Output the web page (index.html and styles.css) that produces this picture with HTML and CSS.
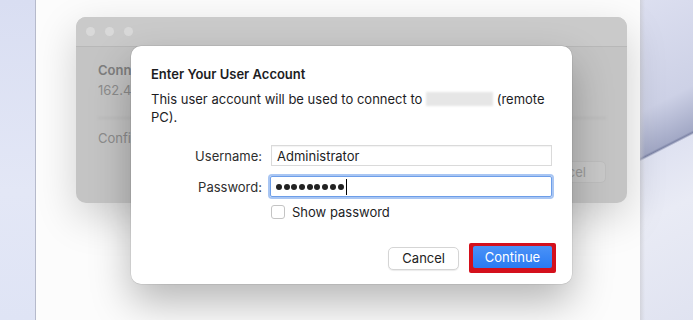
FILE: index.html
```html
<!DOCTYPE html>
<html lang="en">
<head>
    <meta charset="UTF-8">
    <meta name="viewport" content="width=device-width, initial-scale=1.0">
    <title>Enter Your User Account</title>
    <link rel="stylesheet" href="styles.css">
</head>
<body>
    <div class="wall-left"></div>

    <div class="desk">
        <!-- window behind the sheet, dimmed; only the uncovered bits are shown -->
        <div class="back-window">
            <div class="back-titlebar">
                <span class="dot"></span>
                <span class="dot"></span>
                <span class="dot"></span>
            </div>
            <div class="back-body">
                <div class="back-heading">Conn</div>
                <div class="back-text">162.4</div>
                <div class="back-rule"></div>
                <div class="back-text">Confi</div>
                <div class="back-actions">
                    <span class="back-button">Cancel</span>
                </div>
            </div>
        </div>

        <div class="dialog">
            <h1 class="dialog-title">Enter Your User Account</h1>
            <p class="dialog-text">
                This user account will be used to connect to <span class="blurred"></span> (remote<br>PC).
            </p>

            <div class="form">
                <label class="form-label">Username:</label>
                <div class="field">Administrator</div>

                <label class="form-label">Password:</label>
                <div class="field field-focus">
                    <span class="mask"></span><span class="mask"></span><span class="mask"></span>
                    <span class="mask"></span><span class="mask"></span><span class="mask"></span>
                    <span class="mask"></span><span class="mask"></span><span class="mask"></span>
                    <span class="caret"></span>
                </div>

                <span></span>
                <div class="check-row">
                    <span class="checkbox"></span>
                    <span>Show password</span>
                </div>
            </div>

            <div class="actions">
                <button class="btn">Cancel</button>
                <span class="highlight">
                    <button class="btn btn-primary">Continue</button>
                </span>
            </div>
        </div>
    </div>

    <div class="wall-right"></div>
</body>
</html>
```

FILE: styles.css
```css
body {
    display: flex;
    height: 320px;
    margin: 0;
    overflow: hidden;
    font-family: Inter, "Liberation Sans", sans-serif;
    font-size: 13px;
    color: #1d1d1f;
}

.wall-left {
    width: 35px;
    border-right: 1px solid #b6bacb;
    background: linear-gradient(to bottom, #d9def2, #e3e7f6 60%, #dfe4f5);
}

.wall-right {
    width: 53px;
    background:
        linear-gradient(to right, rgba(200, 200, 205, 0.6), rgba(200, 200, 205, 0) 5px),
        linear-gradient(153deg, #dcdff0 0, #cdd1e6 100px, #a3a9c6 140px, #7d84a6 142px, #dfe2f1 144px, #e9ebf5 200px, #dfe2f0 320px);
}

.desk {
    flex: 1;
    position: relative;
    background: #fcfcfc;
}

/* window behind the sheet */
.back-window {
    position: absolute;
    left: 40px;
    top: 17px;
    width: 551px;
    height: 186px;
    border-radius: 10px;
    background: #c4c4c4;
    box-shadow: 0 14px 40px rgba(0, 0, 0, 0.18);
    overflow: hidden;
}

.back-titlebar {
    display: flex;
    align-items: center;
    gap: 10px;
    height: 29px;
    padding-left: 10px;
    background: #cacaca;
    border-bottom: 1px solid #b8b8b8;
}

.dot {
    width: 9px;
    height: 9px;
    border-radius: 50%;
    background: #d9d9d9;
}

.back-body {
    padding: 13px 21px 0 22px;
    color: #8c8c8c;
    line-height: 20px;
    white-space: nowrap;
}

.back-heading,
.back-text {
    width: fit-content;
}

.back-heading {
    font-weight: 600;
    color: #7e7e7e;
}

.back-rule {
    height: 2px;
    margin: 17px 0 9px;
    background: #bcbcbc;
    filter: blur(1px);
}

.back-actions {
    display: flex;
    justify-content: flex-end;
    margin-top: 13px;
}

.back-button {
    padding: 0 19px;
    height: 20px;
    line-height: 20px;
    border-radius: 5px;
    background: #c9c9c9;
    border: 1px solid #bebebe;
    color: #9c9c9c;
}

/* sheet */
.dialog {
    position: absolute;
    left: 95px;
    top: 46px;
    width: 401px;
    padding: 20px 20px 11px;
    border-radius: 10px;
    background: #ffffff;
    box-shadow: 0 0 0 0.5px rgba(0, 0, 0, 0.12), 0 18px 40px rgba(0, 0, 0, 0.28);
}

.dialog-title {
    margin: 0;
    font-size: 13px;
    line-height: 16px;
    font-weight: 600;
}

.dialog-text {
    margin: 8px 0 0;
    line-height: 18px;
}

.blurred {
    display: inline-block;
    width: 67px;
    height: 14px;
    vertical-align: -2px;
    background: #e6e6e6;
    filter: blur(1px);
}

.form {
    display: grid;
    grid-template-columns: 111px 1fr;
    column-gap: 9px;
    row-gap: 10px;
    margin-top: 19px;
    align-items: center;
}

.form-label {
    text-align: right;
    color: #2e2e2e;
}

.field {
    display: flex;
    align-items: center;
    height: 19px;
    padding: 0 5px;
    border: 1px solid #dadada;
    box-shadow: inset 0 1px 1px rgba(0, 0, 0, 0.05);
}

.field-focus {
    gap: 1.7px;
    margin-left: -1px;
    border-color: #6d9ee9;
    border-radius: 2px;
    box-shadow: 0 0 0 2px #a9c6f3;
}

.mask {
    width: 6px;
    height: 6px;
    border-radius: 50%;
    background: #222;
}

.caret {
    width: 1px;
    height: 16px;
    margin-left: 1px;
    background: #000;
}

.check-row {
    display: flex;
    align-items: center;
    gap: 7px;
    margin-top: -3px;
}

.checkbox {
    width: 12px;
    height: 12px;
    border: 1px solid #c4c4c4;
    border-radius: 3px;
    background: #fff;
}

.actions {
    display: flex;
    justify-content: flex-end;
    align-items: center;
    gap: 10px;
    margin-top: 23px;
    margin-right: -4px;
}

.btn {
    height: 23px;
    padding: 0 13px;
    border: 1px solid #d5d5d5;
    border-radius: 5px;
    background: #fff;
    box-shadow: 0 1px 1px rgba(0, 0, 0, 0.08);
    font-family: inherit;
    font-size: 13px;
    color: #222;
}

.highlight {
    display: flex;
    padding: 3px 4px 5px;
    background: #d4101c;
    border-radius: 2px;
}

.btn-primary {
    width: 79px;
    height: 22px;
    padding: 0;
    border: none;
    border-radius: 2px;
    background: linear-gradient(to bottom, #4a92f7, #2a7bf3);
    box-shadow: none;
    color: #fff;
}
```
